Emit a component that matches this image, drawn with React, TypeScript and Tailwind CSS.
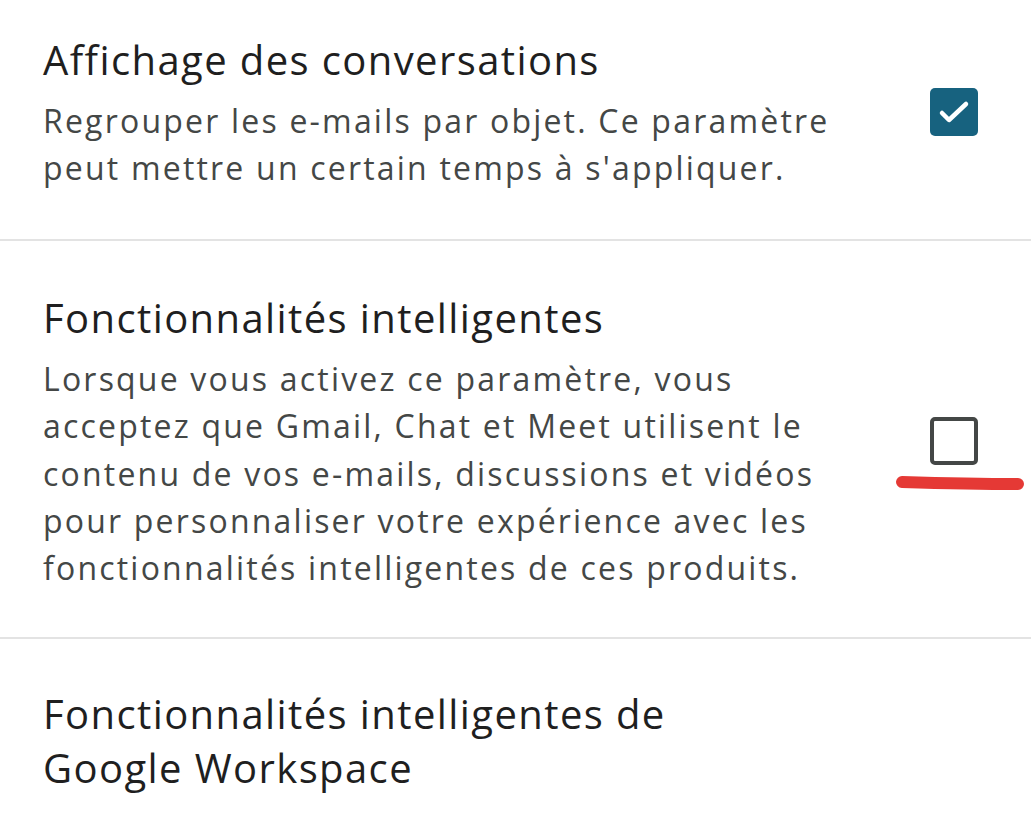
import React from "react";

type Setting = {
  title: string[];
  description?: string[];
  checked?: boolean;
  marked?: boolean;
  pad: string;
};

// wraps follow the screenshot line for line
const settings: Setting[] = [
  {
    title: ["Affichage des conversations"],
    description: [
      "Regrouper les e-mails par objet. Ce paramètre",
      "peut mettre un certain temps à s'appliquer.",
    ],
    checked: true,
    pad: "pt-[33px] pb-[47px]",
  },
  {
    title: ["Fonctionnalités intelligentes"],
    description: [
      "Lorsque vous activez ce paramètre, vous",
      "acceptez que Gmail, Chat et Meet utilisent le",
      "contenu de vos e-mails, discussions et vidéos",
      "pour personnaliser votre expérience avec les",
      "fonctionnalités intelligentes de ces produits.",
    ],
    checked: false,
    marked: true,
    pad: "pt-[50px] pb-[45px]",
  },
  {
    title: ["Fonctionnalités intelligentes de", "Google Workspace"],
    pad: "pt-[48px] pb-[47px]",
  },
];

function Checkbox({ checked, marked }: { checked?: boolean; marked?: boolean }) {
  return (
    <div className="relative w-[48px] h-[48px] shrink-0">
      {checked ? (
        <div className="w-full h-full rounded-[5px] bg-[#17627f]">
          <svg width="48" height="48" viewBox="0 0 48 48" fill="none">
            <path d="M12 25l7 7 17-16" stroke="white" strokeWidth="4.5" strokeLinecap="round" strokeLinejoin="round" />
          </svg>
        </div>
      ) : (
        <div className="w-full h-full rounded-[5px] border-[4px] border-[#444746]" />
      )}
      {marked && (
        <svg className="absolute left-[-34px] top-[58px]" width="128" height="16" viewBox="0 0 128 16">
          <path d="M6 7 C40 8, 90 9, 122 9" stroke="#e53935" strokeWidth="12" strokeLinecap="round" fill="none" />
        </svg>
      )}
    </div>
  );
}

export default function App() {
  return (
    <div className="min-h-screen bg-white font-['Open_Sans',sans-serif] overflow-hidden">
      {settings.map((s, i) => (
        <div key={i}>
          {i > 0 && <div className="h-[2px] bg-[#e3e3e3]" />}
          <div className={`flex items-center pl-[43px] pr-[53px] ${s.pad}`}>
            <div className="flex-1 min-w-0 whitespace-nowrap">
              <div className="text-[40px] leading-[54px] tracking-[1.4px] text-[#1f1f1f]">
                {s.title.map((t, j) => (
                  <div key={j}>{t}</div>
                ))}
              </div>
              {s.description && (
                <div className="mt-[10px] text-[32px] leading-[47.4px] tracking-[2.2px] text-[#444746]">
                  {s.description.map((d, j) => (
                    <div key={j}>{d}</div>
                  ))}
                </div>
              )}
            </div>
            {s.checked !== undefined && <Checkbox checked={s.checked} marked={s.marked} />}
          </div>
        </div>
      ))}
    </div>
  );
}
